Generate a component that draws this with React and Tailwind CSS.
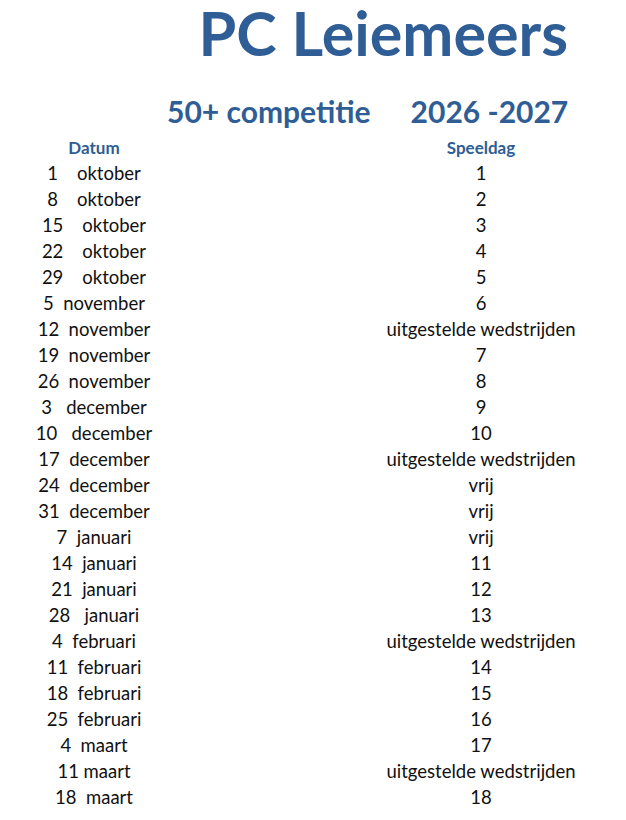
import React from "react";

const rows = [
  ["1    oktober", "1"],
  ["8    oktober", "2"],
  ["15    oktober", "3"],
  ["22    oktober", "4"],
  ["29    oktober", "5"],
  ["5  november", "6"],
  ["12  november", "uitgestelde wedstrijden"],
  ["19  november", "7"],
  ["26  november", "8"],
  ["3   december", "9"],
  ["10   december", "10"],
  ["17  december", "uitgestelde wedstrijden"],
  ["24  december", "vrij"],
  ["31  december", "vrij"],
  ["7  januari", "vrij"],
  ["14  januari", "11"],
  ["21  januari", "12"],
  ["28   januari", "13"],
  ["4  februari", "uitgestelde wedstrijden"],
  ["11  februari", "14"],
  ["18  februari", "15"],
  ["25  februari", "16"],
  ["4  maart", "17"],
  ["11 maart", "uitgestelde wedstrijden"],
  ["18  maart", "18"],
];

const App = () => {
  return (
    <div className="w-[626px] h-[820px] bg-white font-['Lato',sans-serif] text-[#111]">
      {/* Title */}
      <div className="flex justify-end pr-[58px] pt-[1px]">
        <h1 className="text-[61px] leading-[74px] -my-[5px] font-bold text-[#2f5d95]">
          PC Leiemeers
        </h1>
      </div>

      {/* Competition line */}
      <div className="flex items-end pl-[167px] pt-[28px] text-[30px] leading-[36px] font-bold text-[#2f5d95]">
        <span>50+ competitie</span>
        <span className="ml-[40px] whitespace-pre">2026 -2027</span>
      </div>

      {/* Schedule */}
      <div className="grid grid-cols-[188px_173px_240px] mt-[6px]">
        <div className="h-[26px] flex items-center justify-center text-[17px] font-bold text-[#2f5d95]">
          Datum
        </div>
        <div />
        <div className="h-[26px] flex items-center justify-center text-[17px] font-bold text-[#2f5d95]">
          Speeldag
        </div>
        {rows.map(([date, day], i) => (
          <React.Fragment key={i}>
            <div className="h-[26px] flex items-center justify-center text-[18.5px] whitespace-pre">
              {date}
            </div>
            <div />
            <div className="h-[26px] flex items-center justify-center text-[18.5px]">
              {day}
            </div>
          </React.Fragment>
        ))}
      </div>
    </div>
  );
};

export default App;
